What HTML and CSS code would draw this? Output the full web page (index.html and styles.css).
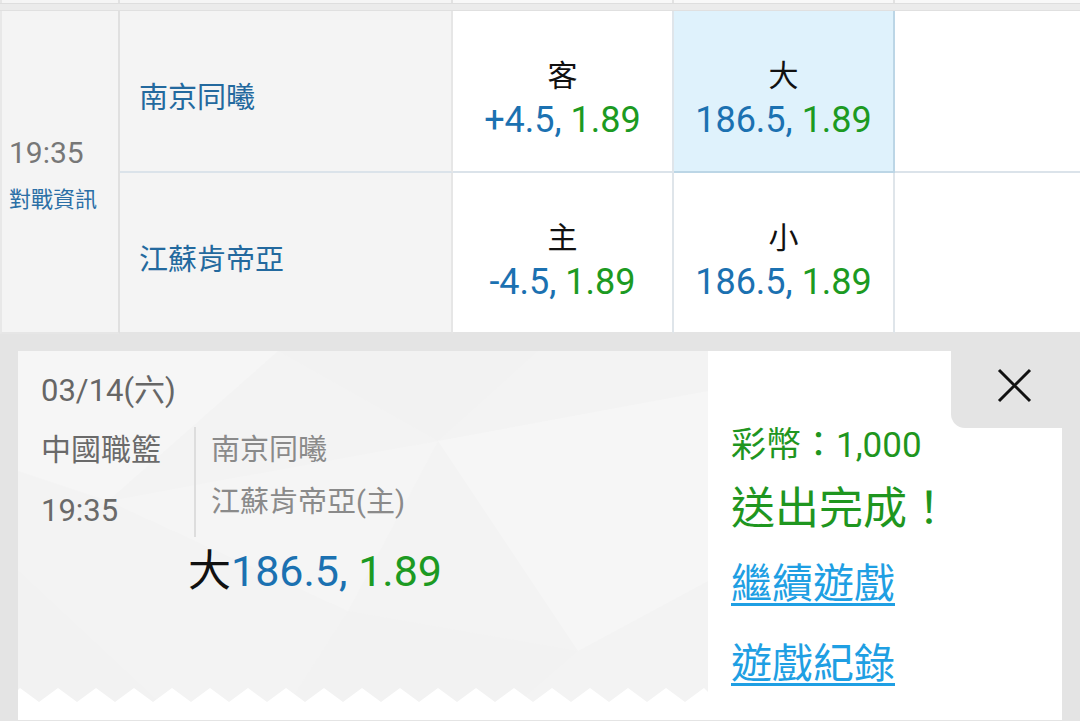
FILE: index.html
```html
<!DOCTYPE html>
<html lang="zh-Hant">
<head>
<meta charset="utf-8">
<title>送出完成</title>
<link rel="stylesheet" href="styles.css">
</head>
<body>
<div class="page">
  <div class="prev-row">
    <div class="pc pc1"></div><div class="pc pc2"></div><div class="pc pc3"></div><div class="pc pc4"></div><div class="pc pc5"></div>
  </div>
  <div class="band"></div>
  <div class="game">
    <div class="time-cell">
      <div class="time">19:35</div>
      <div class="info">對戰資訊</div>
    </div>
    <div class="team r1">南京同曦</div>
    <div class="odd r1">
      <div class="lbl">客</div>
      <div class="val"><span class="blue">+4.5,</span> <span class="green">1.89</span></div>
    </div>
    <div class="odd r1 sel">
      <div class="lbl">大</div>
      <div class="val"><span class="blue">186.5,</span> <span class="green">1.89</span></div>
    </div>
    <div class="empty r1"></div>
    <div class="team r2">江蘇肯帝亞</div>
    <div class="odd r2">
      <div class="lbl">主</div>
      <div class="val"><span class="blue">-4.5,</span> <span class="green">1.89</span></div>
    </div>
    <div class="odd r2">
      <div class="lbl">小</div>
      <div class="val"><span class="blue">186.5,</span> <span class="green">1.89</span></div>
    </div>
    <div class="empty r2"></div>
  </div>

  <div class="overlay">
    <div class="ticket">
      <svg class="texture" width="690" height="369" viewBox="0 0 690 369" aria-hidden="true">
        <rect x="0" y="0" width="690" height="369" fill="#f3f3f3"/>
        <polygon points="0,0 260,0 90,150 0,120" fill="#f6f6f6"/>
        <polygon points="260,0 520,0 420,90" fill="#f2f2f2"/>
        <polygon points="90,150 420,90 330,260" fill="#f5f5f5"/>
        <polygon points="420,90 690,40 690,230 560,300" fill="#f6f6f6"/>
        <polygon points="0,220 150,360 0,369" fill="#f2f2f2"/>
        <polygon points="330,260 560,300 480,369 260,369" fill="#f2f2f2"/>
        <polygon fill="#ffffff" points="0,369 0,339 2,337 21,351 40,337 59,351 78,337 97,351 116,337 135,351 154,337 173,351 192,337 211,351 230,337 249,351 268,337 287,351 306,337 325,351 344,337 363,351 382,337 401,351 420,337 439,351 458,337 477,351 496,337 515,351 534,337 553,351 572,337 591,351 610,337 629,351 648,337 667,351 686,337 690,341 690,369"/>
      </svg>
      <div class="ticket-body">
        <div class="date">03/14(六)</div>
        <div class="match">
          <div class="league">
            <div class="league-name">中國職籃</div>
            <div class="league-time">19:35</div>
          </div>
          <div class="vs">
            <div class="vs-team">南京同曦</div>
            <div class="vs-team second">江蘇肯帝亞(主)</div>
          </div>
        </div>
        <div class="pick"><span class="pick-lbl">大</span><span class="blue">186.5,</span> <span class="green">1.89</span></div>
      </div>
    </div>
    <div class="result">
      <div class="result-head">
        <div class="close">
          <svg width="37" height="37" viewBox="0 0 37 37" aria-hidden="true"><path d="M3 3 L34 34 M34 3 L3 34" stroke="#111" stroke-width="3" fill="none"/></svg>
        </div>
      </div>
      <div class="coins">彩幣：1,000</div>
      <div class="done">送出完成！</div>
      <a class="link first" href="#">繼續遊戲</a>
      <a class="link second" href="#">遊戲紀錄</a>
    </div>
  </div>
</div>
</body>
</html>
```

FILE: styles.css
```css
* { box-sizing: border-box; }
html, body { margin: 0; padding: 0; }
body {
  width: 1080px;
  height: 721px;
  overflow: hidden;
  background: #e4e4e4;
  font-family: Roboto, "Noto Sans CJK TC", "Noto Sans", sans-serif;
}
.page { width: 1080px; }

.prev-row {
  display: grid;
  grid-template-columns: 120px 333px 221px 221px 185px;
  height: 4px;
  border-bottom: 1px solid #dedede;
}
.pc { background: #f5f5f5; border-right: 2px solid #e2e2e2; }
.pc1 { border-left: 2px solid #e6e6e6; }
.pc3, .pc4, .pc5 { background: #f8f8f8; }
.pc5 { border-right: none; }
.band { height: 7px; background: #ebebeb; border-bottom: 1px solid #e0e0e0; }

.game {
  display: grid;
  grid-template-columns: 120px 333px 221px 221px 185px;
  grid-template-rows: 162px 161px;
}
.time-cell {
  grid-row: 1 / span 2;
  background: #f4f4f4;
  border-left: 2px solid #e8e8e8;
  border-right: 2px solid #e0e0e0;
  border-bottom: 2px solid #e6e6e6;
  display: flex;
  flex-direction: column;
  justify-content: center;
  padding-left: 7px;
  padding-top: 4px;
}
.time { font-size: 30px; line-height: 40px; color: #777; }
.info { font-size: 22px; line-height: 30px; color: #2b6fa6; margin-top: 12px; }

.team {
  background: #f4f4f4;
  border-right: 2px solid #e6e6e6;
  border-bottom: 2px solid #dbe3ea;
  display: flex;
  align-items: center;
  padding-left: 19px;
  padding-top: 8px;
  font-size: 29px;
  color: #23699e;
}
.odd, .empty {
  background: #fff;
  border-right: 2px solid #dfe5ea;
  border-bottom: 2px solid #dbe3ea;
}
.odd {
  display: flex;
  flex-direction: column;
  justify-content: center;
  align-items: center;
  padding-top: 18px;
}
.empty { border-right: none; }
.r2 { border-bottom-color: #e4e4e4; }
.odd.sel {
  background: #dff2fc;
  border-right-color: #bcd6e6;
  border-bottom-color: #bcd6e6;
}
.lbl { font-size: 30px; line-height: 40px; color: #111; }
.val { font-size: 36px; line-height: 48px; white-space: nowrap; }
.blue { color: #1b71b1; }
.green { color: #1c9a22; }

.overlay {
  display: flex;
  margin-top: 17px;
  padding: 0 18px;
  height: 369px;
}
.ticket {
  position: relative;
  width: 690px;
  height: 369px;
  overflow: hidden;
}
.texture { position: absolute; left: 0; top: 0; display: block; }
.ticket-body {
  position: relative;
  padding: 20px 0 0 23px;
}
.date { font-size: 31px; line-height: 40px; color: #666; }
.match {
  display: flex;
  margin-top: 16px;
  height: 110px;
}
.league { width: 153px; }
.league-name, .league-time { font-size: 30px; line-height: 46px; color: #6a6a6a; }
.league-time { margin-top: 15px; font-size: 31px; }
.vs {
  border-left: 2px solid #dddddd;
  padding-left: 15px;
}
.vs-team { font-size: 29px; line-height: 46px; color: #8a8a8a; white-space: nowrap; }
.vs-team.second { margin-top: 6px; }
.pick {
  margin-top: 9px;
  margin-left: 147px;
  font-size: 43px;
  line-height: 50px;
  white-space: nowrap;
}
.pick-lbl { color: #111; }

.result {
  width: 354px;
  height: 369px;
  background: #fff;
  display: flex;
  flex-direction: column;
  align-items: flex-start;
  padding-left: 23px;
}
.result-head {
  align-self: stretch;
  height: 77px;
  display: flex;
  justify-content: flex-end;
}
.close {
  width: 111px;
  height: 77px;
  background: #e4e4e4;
  border-bottom-left-radius: 14px;
  padding: 16px 0 0 45px;
}
.close svg { display: block; }
.coins { font-size: 35px; line-height: 36px; color: #1f961f; white-space: nowrap; }
.done { margin-top: 17px; font-size: 44px; line-height: 56px; color: #1f961f; white-space: nowrap; }
.link {
  font-size: 41px;
  line-height: 50px;
  color: #1f9fe3;
  text-decoration: underline;
  text-decoration-thickness: 3px;
  text-underline-offset: 5px;
  white-space: nowrap;
}
.link.first { margin-top: 22px; }
.link.second { margin-top: 30px; }
```
